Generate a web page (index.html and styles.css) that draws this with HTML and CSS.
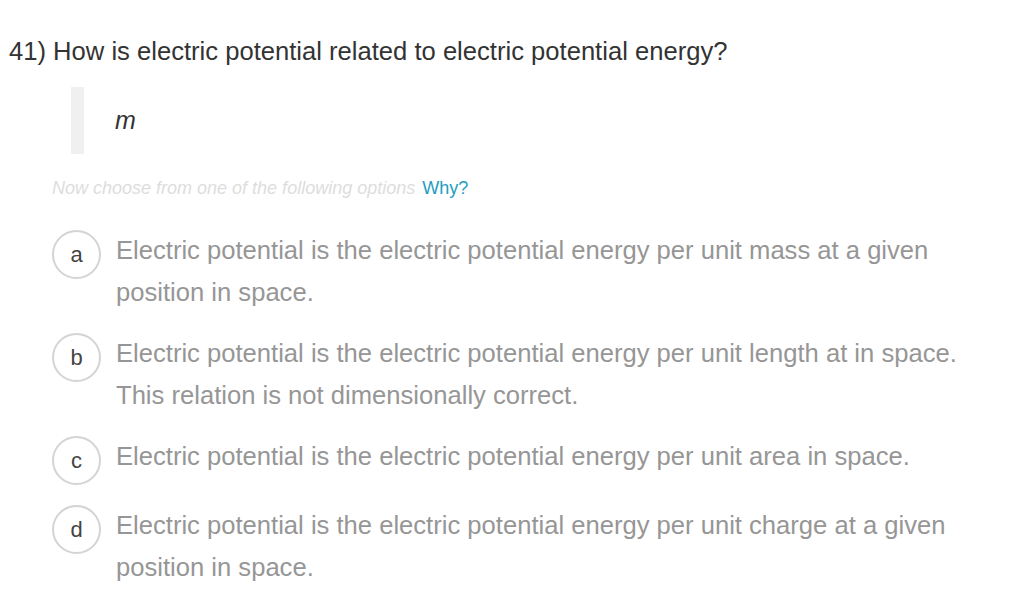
FILE: index.html
```html
<!DOCTYPE html>
<html>
<head>
<meta charset="utf-8">
<link rel="stylesheet" href="styles.css">
</head>
<body>
<div class="question">
  <h1 class="title"><span class="num">41)</span> How is electric potential related to electric potential energy?</h1>
  <div class="quote"><span class="var">m</span></div>
  <p class="hint">Now choose from one of the following options <span class="why">Why?</span></p>
  <ul class="options">
    <li class="option"><span class="badge">a</span><span class="text">Electric potential is the electric potential energy per unit mass at a given position in space.</span></li>
    <li class="option"><span class="badge">b</span><span class="text">Electric potential is the electric potential energy per unit length at in space. This relation is not dimensionally correct.</span></li>
    <li class="option"><span class="badge">c</span><span class="text">Electric potential is the electric potential energy per unit area in space.</span></li>
    <li class="option"><span class="badge">d</span><span class="text">Electric potential is the electric potential energy per unit charge at a given position in space.</span></li>
  </ul>
</div>
</body>
</html>
```

FILE: styles.css
```css
html, body {
  margin: 0;
  padding: 0;
  background: #ffffff;
}
body {
  font-family: "Liberation Sans", Arial, sans-serif;
}
.question {
  padding: 36px 0 0 9px;
}
.title {
  margin: 0;
  font-size: 25.6px;
  font-weight: normal;
  color: #333333;
  line-height: 30px;
}
.quote {
  margin: 21px 0 0 62px;
  border-left: 13px solid #f0f0f0;
  height: 67px;
  padding-left: 31px;
  display: flex;
  align-items: center;
}
.var {
  font-style: italic;
  font-size: 25px;
  color: #333333;
}
.hint {
  margin: 22px 0 0 43px;
  font-size: 18px;
  font-style: italic;
  color: #dddddd;
  line-height: 24px;
}
.why {
  font-style: normal;
  color: #1f9dbf;
  margin-left: 2px;
}
.options {
  list-style: none;
  margin: 29px 0 0 43px;
  padding: 0;
  display: flex;
  flex-direction: column;
  gap: 19px;
}
.option {
  display: flex;
  align-items: flex-start;
  gap: 15px;
}
.badge {
  flex: none;
  width: 45px;
  height: 45px;
  margin-top: 1px;
  border: 2px solid #d4d4d4;
  border-radius: 50%;
  display: flex;
  align-items: center;
  justify-content: center;
  font-size: 22px;
  color: #444444;
}
.text {
  font-size: 25.6px;
  line-height: 42px;
  color: #969696;
  max-width: 870px;
}
```
